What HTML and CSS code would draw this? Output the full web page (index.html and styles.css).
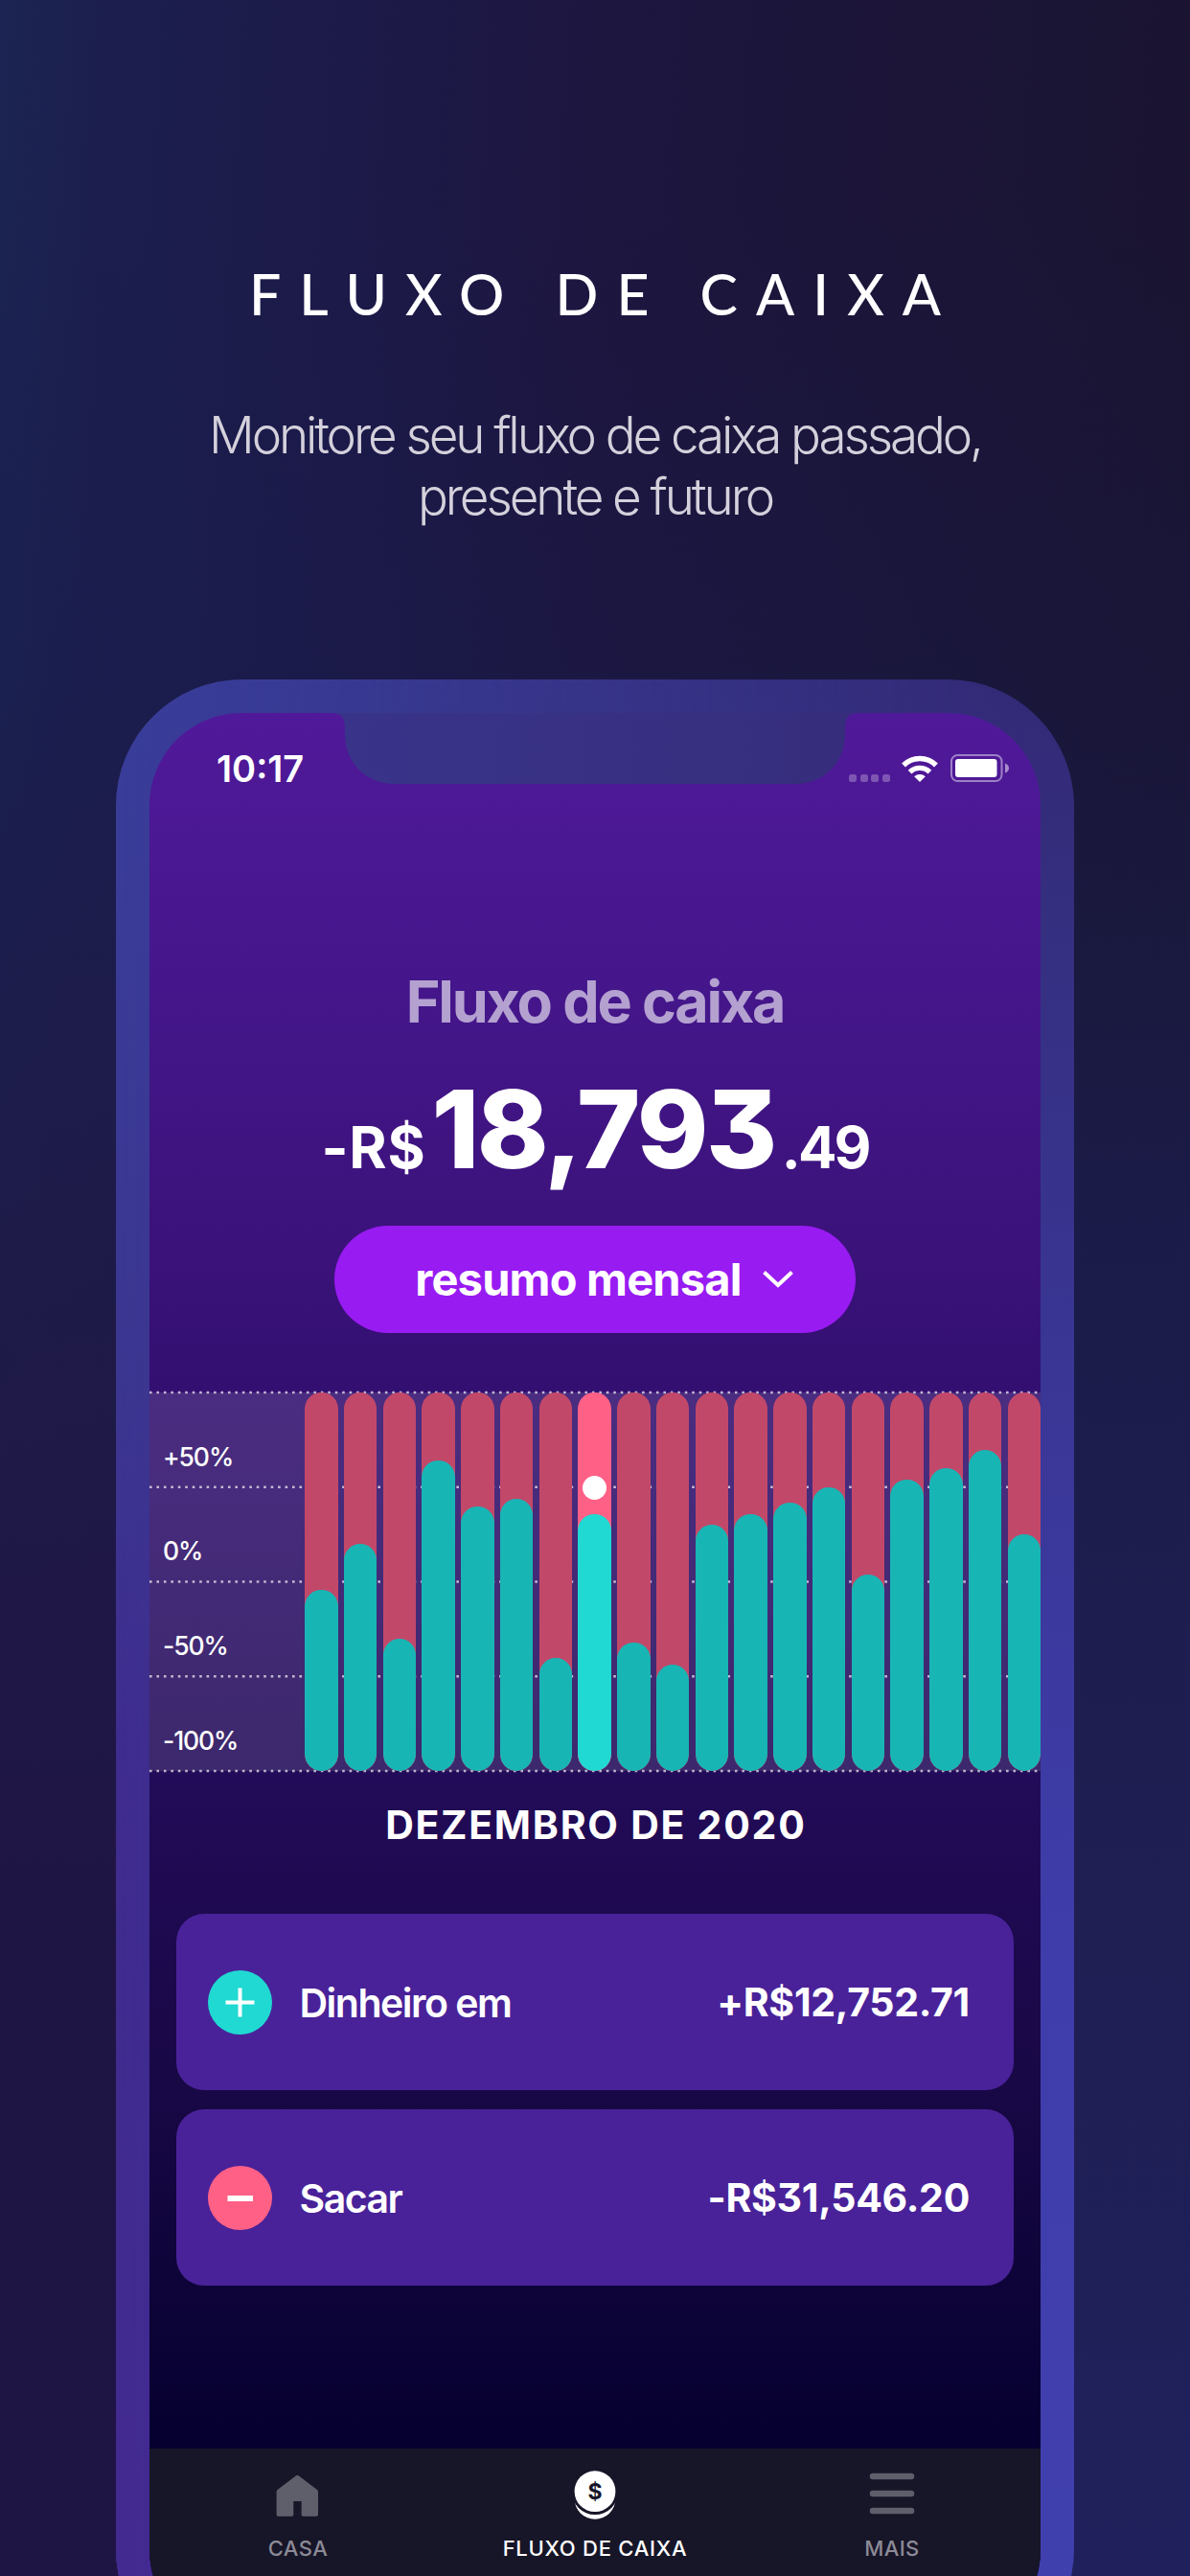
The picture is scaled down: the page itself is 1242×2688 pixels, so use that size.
FILE: index.html
```html
<!DOCTYPE html>
<html lang="pt-BR">
<head>
<meta charset="utf-8">
<title>Fluxo de caixa</title>
<link rel="stylesheet" href="styles.css">
</head>
<body>
<main class="poster">
  <header class="intro">
    <h1 class="title">FLUXO DE CAIXA</h1>
    <p class="subtitle">Monitore seu fluxo de caixa passado,<br>presente e futuro</p>
  </header>

  <section class="phone">
    <div class="screen">
      <svg class="notch" viewBox="0 0 548 74" width="548" height="74" aria-hidden="true">
        <defs><linearGradient id="frame" x1="0" x2="1"><stop offset="0" stop-color="#39348a"/><stop offset="1" stop-color="#362d7c"/></linearGradient></defs>
        <path d="M0 0Q13 0 13 15V22C13 52 35 74 65 74H483C513 74 535 52 535 22V15Q535 0 548 0Z" fill="url(#frame)"/>
      </svg>
      <div class="status">
        <span class="time">10:17</span>
        <div class="status-icons">
          <span class="signal"><i></i><i></i><i></i><i></i></span>
          <svg class="wifi" viewBox="0 0 38 28" width="38" height="28">
            <g fill="none" stroke="#fff" stroke-width="5.4"><path d="M2 10.5a24 24 0 0 1 34 0"/><path d="M8.6 17.6a15 15 0 0 1 20.8 0"/></g>
            <path d="M13.2 22.2a8.4 8.4 0 0 1 11.6 0L19 28z" fill="#fff"/>
          </svg>
          <svg class="battery" viewBox="0 0 62 29" width="62" height="29">
            <rect x="1" y="1" width="52.5" height="27" rx="6.5" fill="none" stroke="#fff" stroke-opacity=".45" stroke-width="2"/>
            <rect x="5" y="5" width="43.5" height="19" rx="3" fill="#fff"/>
            <path d="M57 9.500q4 1.500 4 5t-4 5z" fill="#fff" fill-opacity=".5"/>
          </svg>
        </div>
      </div>

      <h2 class="heading">Fluxo de caixa</h2>
      <div class="balance"><span class="minor">-R$</span><span class="major">18,793</span><span class="minor cents">.49</span></div>
      <button class="pill"><span>resumo mensal</span>
        <svg viewBox="0 0 34 20" width="34" height="20"><path d="M2.500 2.500L17 16L31.500 2.500" fill="none" stroke="#fff" stroke-width="4"/></svg>
      </button>

      <div class="chart">
        <svg class="grid" viewBox="0 0 930 399" width="930" height="399" aria-hidden="true">
          <g stroke="#fff" stroke-opacity=".68" stroke-width="2.600" stroke-dasharray="2.600 4.850">
            <path d="M0 2H930M0 100.700H930M0 199.500H930M0 298.200H930M0 397H930"/>
          </g>
        </svg>
        <div class="scale"><span>+50%</span><span>0%</span><span>-50%</span><span>-100%</span></div>
        <div class="bars">
          <div class="bar"><i style="height:189px"></i></div>
          <div class="bar"><i style="height:237px"></i></div>
          <div class="bar"><i style="height:138px"></i></div>
          <div class="bar"><i style="height:324px"></i></div>
          <div class="bar"><i style="height:276px"></i></div>
          <div class="bar"><i style="height:284px"></i></div>
          <div class="bar"><i style="height:118px"></i></div>
          <div class="bar active"><i style="height:268px"></i><b class="knob"></b></div>
          <div class="bar"><i style="height:134px"></i></div>
          <div class="bar"><i style="height:111px"></i></div>
          <div class="bar"><i style="height:257px"></i></div>
          <div class="bar"><i style="height:268px"></i></div>
          <div class="bar"><i style="height:280px"></i></div>
          <div class="bar"><i style="height:296px"></i></div>
          <div class="bar"><i style="height:205px"></i></div>
          <div class="bar"><i style="height:304px"></i></div>
          <div class="bar"><i style="height:316px"></i></div>
          <div class="bar"><i style="height:335px"></i></div>
          <div class="bar"><i style="height:247px"></i></div>
        </div>
      </div>
      <h3 class="month">DEZEMBRO DE 2020</h3>

      <div class="cards">
        <div class="card">
          <svg class="badge in" viewBox="0 0 67 67" width="67" height="67"><path d="M18.500 33.500h30M33.500 18.500v30" stroke="#fff" stroke-width="4"/></svg>
          <span class="name">Dinheiro em</span><span class="value">+R$12,752.71</span>
        </div>
        <div class="card">
          <svg class="badge out" viewBox="0 0 67 67" width="67" height="67"><path d="M20.500 34h26.500" stroke="#fff" stroke-width="6"/></svg>
          <span class="name">Sacar</span><span class="value">-R$31,546.20</span>
        </div>
      </div>

      <nav class="tabs">
        <a class="tab">
          <svg viewBox="0 0 52 52" width="52" height="52"><path d="M24 6.300Q25.300 5 26.600 6.300L46.300 21.300Q47 22 47 23V47Q47 48.700 45.300 48.700H31.300Q29.600 48.700 29.600 47V33H21.300V47Q21.300 48.700 19.600 48.700H5.300Q3.600 48.700 3.600 47V23Q3.600 22 4.300 21.300Z" fill="#5f5e6b"/></svg>
          <span>CASA</span>
        </a>
        <a class="tab on">
          <svg viewBox="0 0 52 52" width="52" height="52"><circle cx="26" cy="30.300" r="21.400" fill="#fff"/><circle cx="26" cy="22.700" r="24.300" fill="#171528"/><circle cx="26" cy="22.700" r="21.400" fill="#fff"/><text x="26" y="31" class="coin">$</text></svg>
          <span>FLUXO DE CAIXA</span>
        </a>
        <a class="tab">
          <svg viewBox="0 0 52 52" width="52" height="52"><path d="M6 7H46M6 25H46M6 43H46" stroke="#5f5e6b" stroke-width="6.500" stroke-linecap="round"/></svg>
          <span>MAIS</span>
        </a>
      </nav>
    </div>
  </section>
</main>
</body>
</html>
```
FILE: styles.css
```css
* { box-sizing: border-box; margin: 0; padding: 0; }
body {
  width: 1242px; height: 2688px; overflow: hidden; color: #fff;
  font-family: Inter, "Liberation Sans", sans-serif;
}
.poster {
  width: 1242px; height: 2688px; overflow: hidden;
  display: flex; flex-direction: column; align-items: center;
  background:
    linear-gradient(180deg, transparent 26.4%, rgba(31,25,70,.8) 52%, #1f1545 75%) left / 50% 100% no-repeat,
    linear-gradient(180deg, transparent 26.4%, #1a193f 38%, #1b1b49 48%, #1f1f54 75%, #20205c 100%) right / 50% 100% no-repeat,
    linear-gradient(180deg, transparent 8%, rgba(22,28,78,.25) 26.4%),
    linear-gradient(94deg, #1b2452 0%, #1c1f4e 8%, #1c1a49 25%, #1d163f 45%, #19132d 100%);
}
.intro { height: 709px; flex: none; padding-top: 271px; text-align: center; white-space: nowrap; }
.title { font: 500 59px/72px Lato, Inter, sans-serif; letter-spacing: 19.1px; margin-right: -19.1px; }
.subtitle { margin-top: 79px; font-size: 53px; line-height: 64px; font-weight: 300; color: #d4d1dc; letter-spacing: -3.1px; }
.phone {
  position: relative; width: 1000px; height: 2083px; flex: none; padding: 35px; border-radius: 132px; overflow: hidden;
  background: linear-gradient(180deg, #332a76 0%, #352f80 12%, #3a3798 38%, #3f3dab 65%, #4040ae 100%);
}
.phone::before {
  content: ""; position: absolute; inset: 0;
  background: linear-gradient(180deg, #393e9b 0%, #3b3690 35%, #3f2c8e 55%, #432990 100%);
  -webkit-mask-image: linear-gradient(90deg, #000 0, rgba(0,0,0,.85) 12%, rgba(0,0,0,.6) 40%, transparent 95%);
  mask-image: linear-gradient(90deg, #000 0, rgba(0,0,0,.85) 12%, rgba(0,0,0,.6) 40%, transparent 95%);
}
.screen {
  position: relative; width: 930px; height: 2013px; overflow: hidden; border-radius: 96px;
  display: flex; flex-direction: column; align-items: center;
  background: linear-gradient(180deg, #50199a 0, #44168a 300px, #3a1279 580px, #320f70 710px, #220b58 1110px, #190846 1420px, #05002f 1811px);
}
.notch { position: absolute; left: 191px; top: 0; }
.status { width: 100%; height: 240px; padding: 34px 33px 0 70px; display: flex; justify-content: space-between; align-items: flex-start; }
.time { font-size: 38px; line-height: 48px; font-weight: 600; }
.status-icons { display: flex; align-items: flex-end; padding-top: 9px; height: 38px; }
.signal { display: flex; gap: 3.600px; margin-right: 12px; }
.signal i { width: 8px; height: 8px; border-radius: 2.500px; background: rgba(255,255,255,.27); }
.battery { margin-left: 13px; margin-right: -1px; }
.heading { font-size: 61px; line-height: 74px; font-weight: 700; color: rgba(255,255,255,.6); margin-top: 24px; letter-spacing: -2.150px; white-space: nowrap; }
.balance { height: 136px; margin-top: 28px; display: flex; align-items: baseline; font-weight: 700; font-feature-settings: "cv09"; white-space: nowrap; }
.major { font-size: 113px; line-height: 136px; font-weight: 800; letter-spacing: -2.500px; margin: 0 7px 0 6px; }
.minor { font-size: 60px; letter-spacing: .700px; }
.cents { letter-spacing: -3px; }
.pill {
  width: 544px; height: 112px; border: 0; border-radius: 56px; background: #981bf2; color: #fff;
  font: 700 47px/56px Inter, sans-serif; letter-spacing: -.800px; white-space: nowrap;
  display: flex; align-items: center; justify-content: center; gap: 21px; margin-top: 33px; padding-left: 20px;
}
.chart {
  position: relative; width: 930px; height: 395px; margin-top: 62px; flex: none; display: flex; justify-content: space-between;
  background: rgba(255,255,255,.12);
}
.grid { position: absolute; left: 0; top: -2px; }
.scale { width: 162px; padding-left: 14px; display: flex; flex-direction: column; }
.scale span { height: 98.750px; padding-top: 49.500px; font-size: 26.500px; line-height: 34px; font-weight: 550; letter-spacing: -1.100px; }
.bars { position: relative; width: 768px; display: flex; justify-content: space-between; }
.bar { position: relative; width: 34.500px; height: 395px; border-radius: 17.250px; overflow: hidden; background: #c24869; display: flex; align-items: flex-end; }
.bar i { width: 100%; border-radius: 17.250px; background: #18b5b5; }
.bar.active { background: #ff6086; }
.bar.active i { background: #20d9d2; }
.knob { position: absolute; left: 4.500px; top: 86.500px; width: 25.500px; height: 25.500px; border-radius: 50%; background: #fff; }
.month { margin-top: 31px; font-size: 41px; line-height: 50px; font-weight: 700; letter-spacing: 1.750px; margin-right: -1.750px; white-space: nowrap; }
.cards { width: 874px; margin-top: 68px; display: flex; flex-direction: column; gap: 20px; }
.card { height: 184px; border-radius: 29px; background: #492299; padding: 0 46px 0 33px; display: flex; align-items: center; white-space: nowrap; }
.badge { border-radius: 50%; flex: none; }
.in { background: #20d9d2; }
.out { background: #ff6086; }
.name { margin-left: 28.500px; font-size: 41px; line-height: 50px; font-weight: 600; letter-spacing: -1.500px; padding-top: 1px; }
.value { margin-left: auto; font-size: 41px; line-height: 50px; font-weight: 700; letter-spacing: -.300px; font-feature-settings: "cv09"; }
.tabs { position: relative; width: 930px; height: 202px; margin-top: auto; padding-top: 22px; background: #171528; display: grid; grid-template-columns: repeat(3, 1fr); }
.tab { display: flex; flex-direction: column; align-items: center; color: #8c8a96; font-size: 22px; line-height: 28px; font-weight: 500; gap: 16px; letter-spacing: .400px; white-space: nowrap; }
.tab.on { color: #fff; letter-spacing: .750px; }
.coin { font: 700 23px Inter, sans-serif; text-anchor: middle; fill: #171528; letter-spacing: 0; }
```
